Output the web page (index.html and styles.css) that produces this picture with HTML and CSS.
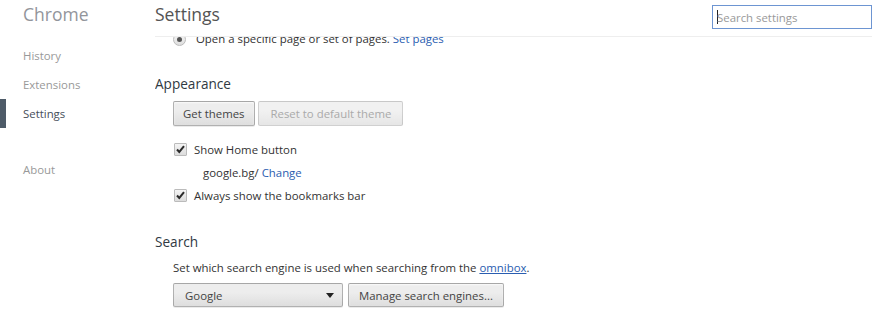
FILE: index.html
```html
<!DOCTYPE html>
<html lang="en">
<head>
  <meta charset="UTF-8">
  <title>Settings</title>
  <link rel="stylesheet" href="styles.css">
</head>
<body>
<nav class="sidebar">
  <h1>Chrome</h1>
  <ul class="nav-list">
    <li>History</li>
    <li>Extensions</li>
    <li class="selected">Settings</li>
    <li class="spacer"></li>
    <li>About</li>
  </ul>
</nav>

<main class="main">
  <header class="page-header">
    <h2>Settings</h2>
    <div class="search-box"><span class="caret"></span><span class="placeholder">Search settings</span></div>
  </header>

  <div class="scroll">
    <div class="radio-row">
      <span class="radio"><span class="dot"></span></span>
      <span>Open a specific page or set of pages. <a href="#">Set pages</a></span>
    </div>

    <section class="section appearance">
      <h3>Appearance</h3>
      <div class="button-row">
        <button class="btn">Get themes</button>
        <button class="btn btn-wide" disabled>Reset to default theme</button>
      </div>
      <div class="check-row">
        <span class="checkbox"><svg width="11" height="11" viewBox="0 0 11 11"><path d="M2 5.5 L4.3 8 L9 2.2" fill="none" stroke="#2b2b2b" stroke-width="2"/></svg></span>
        <span>Show Home button</span>
      </div>
      <div class="sub-row">google.bg/ <a href="#">Change</a></div>
      <div class="check-row">
        <span class="checkbox"><svg width="11" height="11" viewBox="0 0 11 11"><path d="M2 5.5 L4.3 8 L9 2.2" fill="none" stroke="#2b2b2b" stroke-width="2"/></svg></span>
        <span>Always show the bookmarks bar</span>
      </div>
    </section>

    <section class="section search">
      <h3>Search</h3>
      <p class="hint">Set which search engine is used when searching from the <a href="#" class="underline">omnibox</a>.</p>
      <div class="button-row">
        <div class="select"><span>Google</span><span class="arrow"></span></div>
        <button class="btn">Manage search engines...</button>
      </div>
    </section>
  </div>
</main>
</body>
</html>
```

FILE: styles.css
```css
* {
  margin: 0;
  padding: 0;
  box-sizing: border-box;
}

body {
  display: flex;
  height: 319px;
  overflow: hidden;
  background: #fff;
  font-family: 'Open Sans', 'Noto Sans', sans-serif;
  font-size: 11.4px;
  color: #333;
}

a {
  color: #2a5db0;
  text-decoration: none;
}

a.underline {
  text-decoration: underline;
}

/* sidebar */
.sidebar {
  width: 155px;
  flex-shrink: 0;
}

.sidebar h1 {
  height: 41px;
  padding-left: 23px;
  line-height: 29px;
  font-size: 17.5px;
  font-weight: normal;
  color: #92959b;
}

.nav-list {
  list-style: none;
}

.nav-list li {
  height: 29px;
  line-height: 29px;
  padding-left: 23px;
  color: #999;
}

.nav-list li.selected {
  border-left: 6px solid #4e5b68;
  padding-left: 17px;
  color: #464e5a;
}

.nav-list li.spacer {
  height: 27px;
}

/* main */
.main {
  flex: 1;
  display: flex;
  flex-direction: column;
  padding-right: 5px;
}

.page-header {
  height: 37px;
  flex-shrink: 0;
  display: flex;
  justify-content: space-between;
  align-items: flex-start;
  border-bottom: 1px solid #eee;
  background: #fff;
  position: relative;
  z-index: 1;
}

.page-header h2 {
  font-size: 17.5px;
  font-weight: normal;
  line-height: 29px;
  color: #545454;
}

.search-box {
  width: 160px;
  height: 24px;
  margin-top: 5px;
  border: 1px solid #6d95d2;
  display: flex;
  align-items: center;
  padding-left: 4px;
  color: #999;
}

.caret {
  width: 1px;
  height: 14px;
  background: #222;
  margin-right: -1px;
}

.scroll {
  flex: 1;
  overflow: hidden;
  padding-left: 18px;
}

.radio-row {
  margin-top: -8px;
  height: 20px;
  display: flex;
  align-items: center;
  gap: 10px;
  line-height: 20px;
}

.radio {
  width: 13px;
  height: 13px;
  border-radius: 50%;
  border: 1px solid #bbb;
  background: linear-gradient(#f6f6f6, #dedede);
  display: flex;
  align-items: center;
  justify-content: center;
}

.radio .dot {
  width: 5px;
  height: 5px;
  border-radius: 50%;
  background: #555;
}

.section h3 {
  margin-left: -18px;
  font-size: 13.6px;
  font-weight: normal;
  line-height: 20px;
  color: #303942;
}

.appearance {
  margin-top: 25px;
}

.search {
  margin-top: 25px;
}

.button-row {
  display: flex;
  gap: 3px;
  margin-top: 7px;
  margin-bottom: 12px;
}

.btn {
  height: 25px;
  padding: 0 9px;
  font-family: inherit;
  font-size: 11.4px;
  color: #444;
  background: linear-gradient(#ededed, #ededed 38%, #dedede);
  border: 1px solid rgba(0, 0, 0, 0.25);
  border-radius: 2px;
  box-shadow: 0 1px 0 rgba(0, 0, 0, 0.08), inset 0 1px 2px rgba(255, 255, 255, 0.75);
}

.btn-wide {
  padding: 0 11px 0 12px;
}

.btn:disabled {
  color: #aaa;
  background: linear-gradient(#f1f1f1, #f1f1f1 38%, #e6e6e6);
  border-color: rgba(80, 80, 80, 0.2);
  box-shadow: none;
}

.check-row {
  height: 23px;
  display: flex;
  align-items: center;
  gap: 7px;
  padding-left: 1px;
}

.checkbox {
  width: 13px;
  height: 13px;
  border: 1px solid #bbb;
  border-radius: 1px;
  background: linear-gradient(#f4f4f4, #dcdcdc);
  display: flex;
  align-items: center;
  justify-content: center;
}

.sub-row {
  height: 23px;
  line-height: 23px;
  padding-left: 30px;
}

.hint {
  margin-top: 6px;
  line-height: 20px;
}

.search .button-row {
  margin-top: 5px;
  gap: 5px;
}

.select {
  width: 170px;
  height: 24px;
  display: flex;
  align-items: center;
  justify-content: space-between;
  padding: 0 8px 0 11px;
  color: #444;
  background: linear-gradient(#ededed, #ededed 38%, #dedede);
  border: 1px solid rgba(0, 0, 0, 0.25);
  border-radius: 2px;
  box-shadow: 0 1px 0 rgba(0, 0, 0, 0.08);
}

.arrow {
  width: 0;
  height: 0;
  border-left: 4px solid transparent;
  border-right: 4px solid transparent;
  border-top: 5px solid #222;
}

.search .btn {
  height: 24px;
  padding: 0 10px;
}
```
